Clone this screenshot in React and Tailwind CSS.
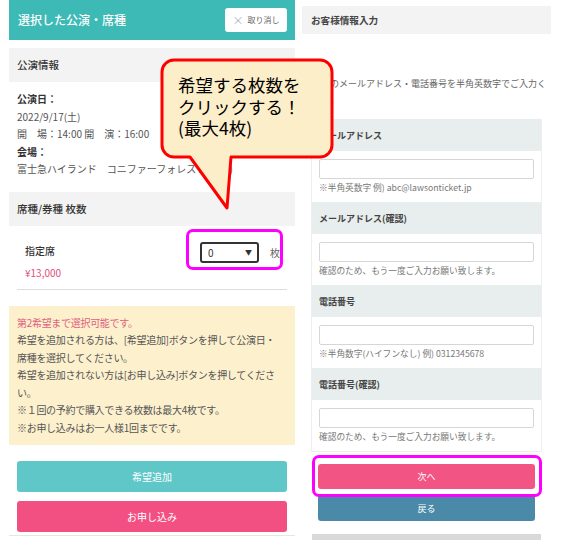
import React from 'react';

const jp = { fontFamily: '"Noto Sans CJK JP", "Noto Sans", sans-serif' };

function FormBlock({ label, hint }) {
  return (
    <div>
      <div className="h-[32px] bg-[#e8eded] px-[7px] flex items-center text-[9px] font-bold text-[#444]">{label}</div>
      <div className="bg-white px-[7px] pt-[8px] pb-[7px]">
        <div className="h-[20px] border border-[#d6d6d6] rounded-[2px] bg-white" />
        <div className="h-[16px] flex items-center text-[8.7px] text-[#777] whitespace-nowrap">{hint}</div>
      </div>
    </div>
  );
}

export default function App() {
  return (
    <div className="relative w-[568px] h-[540px] overflow-hidden bg-white flex" style={jp}>
      {/* 左：選択した公演・席種 */}
      <div className="ml-[9px] w-[286px] flex flex-col border-b border-[#e6e6e6] h-[536px]">
        <div className="h-[40px] bg-[#3dbab6] flex items-center justify-between pl-[9px] pr-[8px]">
          <span className="text-white text-[12px] font-medium">選択した公演・席種</span>
          <button className="w-[62px] h-[24px] bg-white rounded-[3px] flex items-center justify-center gap-[4px] text-[8px] text-[#666]">
            <span className="text-[11px] text-[#999] font-light leading-none">×</span>
            取り消し
          </button>
        </div>

        <div className="mt-[8px] h-[34px] bg-[#f3f3f3] px-[8px] flex items-center text-[10.5px] font-medium text-[#333]">公演情報</div>
        <div className="px-[8px] pt-[8px] text-[10px] leading-[17.5px] text-[#555]">
          <div className="font-bold text-[#333]">公演日：</div>
          <div>2022/9/17(土)</div>
          <div>開　場：14:00 開　演：16:00</div>
          <div className="font-bold text-[#333]">会場：</div>
          <div>富士急ハイランド　コニファーフォレスト(山梨)</div>
        </div>

        <div className="mt-[14px] h-[34px] bg-[#f3f3f3] px-[8px] flex items-center text-[10.5px] font-medium text-[#333]">席種/券種 枚数</div>
        <div className="mx-[8px] h-[64px] border-b border-[#dddddd] flex items-start">
          <div className="pl-[8px] pt-[16px]">
            <div className="text-[10px] font-medium text-[#333] leading-[18px]">指定席</div>
            <div className="mt-[4px] text-[10px] text-[#e0507a] leading-[18px]">¥13,000</div>
          </div>
          <div className="ml-auto mr-[7px] mt-[16px] flex items-center">
            <div className="w-[59px] h-[21px] border-2 border-[#333] rounded-[3px] flex items-center justify-between pl-[6px] pr-[5px] text-[10px] text-[#333]">
              <span>0</span>
              <span className="text-[7px]">▼</span>
            </div>
            <span className="ml-[11px] text-[10px] text-[#666]">枚</span>
          </div>
        </div>

        <div className="mt-[16px] bg-[#fdf0cd] px-[8px] pt-[8px] h-[139px] text-[10px] leading-[17.5px] text-[#555] whitespace-nowrap tracking-[-0.3px]">
          <div className="text-[#e0607f]">第2希望まで選択可能です。</div>
          <div>希望を追加される方は、[希望追加]ボタンを押して公演日・</div>
          <div>席種を選択してください。</div>
          <div>希望を追加されない方は[お申し込み]ボタンを押してくださ</div>
          <div>い。</div>
          <div>※１回の予約で購入できる枚数は最大4枚です。</div>
          <div>※お申し込みはお一人様1回までです。</div>
        </div>

        <div className="mx-[8px] mt-[16px] flex flex-col gap-[9px]">
          <button className="h-[31px] rounded-[3px] bg-[#60c7c8] text-white text-[10px]">希望追加</button>
          <button className="h-[31px] rounded-[3px] bg-[#f25082] text-white text-[10px]">お申し込み</button>
        </div>
      </div>

      {/* 右：お客様情報入力 */}
      <div className="ml-[7px] w-[249px] flex flex-col">
        <div className="mt-[6px] h-[31px] bg-[#f3f3f3] px-[9px] flex items-center text-[9.6px] font-bold text-[#444]">お客様情報入力</div>
        <div className="mt-[41px] pl-[1px] text-[9px] leading-[17px] text-[#666]">
          お客様のメールアドレス・電話番号を半角英数字でご入力ください。
        </div>
        <div className="mx-[9px] mt-[10px] border border-[#eeeeee] border-t-0">
          <FormBlock label="メールアドレス" hint="※半角英数字 例) abc@lawsonticket.jp" />
          <FormBlock label="メールアドレス(確認)" hint="確認のため、もう一度ご入力お願い致します。" />
          <FormBlock label="電話番号" hint="※半角数字(ハイフンなし) 例)  0312345678" />
          <FormBlock label="電話番号(確認)" hint="確認のため、もう一度ご入力お願い致します。" />
        </div>
        <div className="mx-[16px] mt-[12px] flex flex-col gap-[6px]">
          <button className="h-[25px] rounded-[3px] bg-[#f25584] text-white text-[9px]">次へ</button>
          <button className="h-[26px] rounded-[3px] bg-[#4a8aa8] text-white text-[9px]">戻る</button>
        </div>
        <div className="mx-[10px] mt-[13px] h-[6px] bg-[#d9d9d9]" />
      </div>

      {/* 注釈：枠 */}
      <div className="absolute left-[186px] top-[229px] w-[97px] h-[41px] border-[3px] border-[#ff00ff] rounded-[7px]" />
      <div className="absolute left-[312px] top-[455px] w-[230px] h-[42px] border-[3px] border-[#ff00ff] rounded-[7px]" />

      {/* 注釈：吹き出し */}
      <svg className="absolute left-[160px] top-[58px]" width="176" height="154" viewBox="0 0 176 154">
        <path
          d="M14 2 H160 A12 12 0 0 1 172 14 V87 A12 12 0 0 1 160 99 H71 L67 150 L30 99 H14 A12 12 0 0 1 2 87 V14 A12 12 0 0 1 14 2 Z"
          fill="#fdeeca"
          stroke="#ff0000"
          strokeWidth="3"
          strokeLinejoin="round"
        />
      </svg>
      <div className="absolute left-[178px] top-[74px] text-[17.5px] leading-[21.5px] text-black whitespace-nowrap">
        <div>希望する枚数を</div>
        <div>クリックする！</div>
        <div>(最大4枚)</div>
      </div>
    </div>
  );
}
